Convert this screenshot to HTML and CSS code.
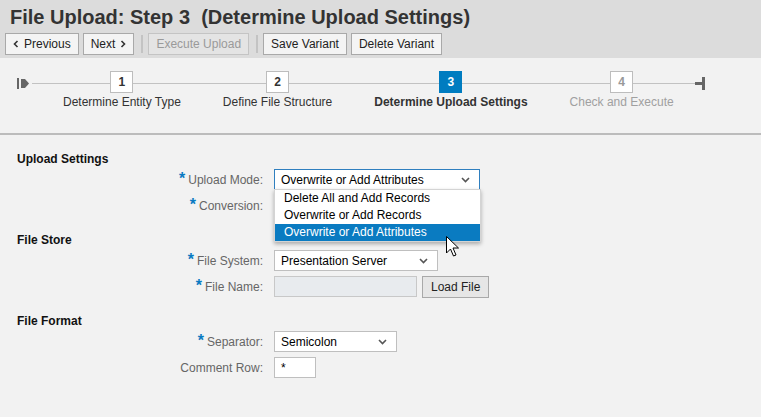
FILE: index.html
```html
<!DOCTYPE html>
<html lang="en">
<head>
<meta charset="utf-8">
<title>File Upload: Step 3</title>
<link rel="stylesheet" href="styles.css">
</head>
<body>
<div class="page">
  <header class="header">
    <h1 class="title">File Upload: Step 3&nbsp; (Determine Upload Settings)</h1>
    <div class="toolbar">
      <button class="btn"><svg class="chev" width="6" height="8" viewBox="0 0 6 8"><path d="M4.5 1 L1.5 4 L4.5 7" fill="none" stroke="#333" stroke-width="1.6"/></svg>Previous</button>
      <button class="btn">Next<svg class="chev chev-r" width="6" height="8" viewBox="0 0 6 8"><path d="M1.5 1 L4.5 4 L1.5 7" fill="none" stroke="#333" stroke-width="1.6"/></svg></button>
      <span class="tb-sep"></span>
      <button class="btn btn-disabled">Execute Upload</button>
      <span class="tb-sep"></span>
      <button class="btn">Save Variant</button>
      <button class="btn">Delete Variant</button>
    </div>
  </header>

  <nav class="roadmap">
    <svg class="rm-start" width="13" height="11" viewBox="0 0 13 11"><rect x="0" y="0" width="2" height="11" fill="#666"/><path d="M4 1 H8 L12 5.5 L8 10 H4 Z" fill="#666"/></svg>
    <div class="steps">
      <div class="step"><span class="step-num">1</span><span class="step-label">Determine Entity Type</span></div>
      <div class="step"><span class="step-num">2</span><span class="step-label">Define File Structure</span></div>
      <div class="step step-current"><span class="step-num">3</span><span class="step-label">Determine Upload Settings</span></div>
      <div class="step step-future"><span class="step-num">4</span><span class="step-label">Check and Execute</span></div>
    </div>
    <svg class="rm-end" width="11" height="13" viewBox="0 0 11 13"><rect x="0" y="5" width="8" height="3" fill="#666"/><rect x="7" y="0" width="3" height="13" fill="#666"/></svg>
  </nav>

  <div class="divider"></div>

  <main class="form">
    <section class="section">
      <h2 class="section-title">Upload Settings</h2>
      <div class="row">
        <label class="label"><span class="req">*</span>Upload Mode:</label>
        <div class="field field-open">
          <div class="select select-focus w-206"><span>Overwrite or Add Attributes</span><svg class="caret" width="9" height="6" viewBox="0 0 9 6"><path d="M1 1 L4.5 4.5 L8 1" fill="none" stroke="#555" stroke-width="1.6"/></svg></div>
          <ul class="dropdown">
            <li class="opt">Delete All and Add Records</li>
            <li class="opt">Overwrite or Add Records</li>
            <li class="opt opt-sel">Overwrite or Add Attributes</li>
          </ul>
        </div>
      </div>
      <div class="row">
        <label class="label"><span class="req">*</span>Conversion:</label>
        <div class="field"><div class="select w-206"></div></div>
      </div>
    </section>

    <section class="section section-2">
      <h2 class="section-title">File Store</h2>
      <div class="row">
        <label class="label"><span class="req">*</span>File System:</label>
        <div class="field"><div class="select w-164"><span>Presentation Server</span><svg class="caret" width="9" height="6" viewBox="0 0 9 6"><path d="M1 1 L4.5 4.5 L8 1" fill="none" stroke="#555" stroke-width="1.6"/></svg></div></div>
      </div>
      <div class="row">
        <label class="label"><span class="req">*</span>File Name:</label>
        <div class="field field-inline"><div class="input input-ro w-143"></div><button class="btn btn-load">Load File</button></div>
      </div>
    </section>

    <section class="section section-3">
      <h2 class="section-title">File Format</h2>
      <div class="row">
        <label class="label"><span class="req">*</span>Separator:</label>
        <div class="field"><div class="select w-123"><span>Semicolon</span><svg class="caret" width="9" height="6" viewBox="0 0 9 6"><path d="M1 1 L4.5 4.5 L8 1" fill="none" stroke="#555" stroke-width="1.6"/></svg></div></div>
      </div>
      <div class="row">
        <label class="label">Comment Row:</label>
        <div class="field"><div class="input w-42">*</div></div>
      </div>
    </section>
  </main>

  <svg class="cursor" width="13" height="21" viewBox="0 0 13 21"><path d="M0.5 0.5 V17 L4.5 13 L7.5 20 L10 19 L7 12 H12.5 Z" fill="#fff" stroke="#000" stroke-width="1"/></svg>
</div>
</body>
</html>
```

FILE: styles.css
```css
* { box-sizing: border-box; }
html, body { margin: 0; padding: 0; }
body {
  font-family: "Liberation Sans", Arial, sans-serif;
  font-size: 12px;
  color: #333;
  background: #f2f2f2;
  width: 761px;
  height: 417px;
  overflow: hidden;
}
.page { position: relative; height: 417px; }

.header {
  background: #dcdcdc;
  height: 58px;
  padding: 5px 0 0 0;
}
.title {
  margin: 0 0 0 10px;
  font-size: 20px;
  line-height: 24px;
  font-weight: bold;
  color: #333;
}
.toolbar {
  display: flex;
  align-items: center;
  gap: 4px;
  margin-top: 4px;
  padding-left: 5px;
}
.btn {
  height: 22px;
  padding: 0 7px;
  font-family: inherit;
  font-size: 12px;
  color: #222;
  background: #f4f4f4;
  border: 1px solid #a9a9a9;
  border-radius: 0;
  display: inline-flex;
  align-items: center;
  gap: 5px;
  line-height: 1;
}
.btn-disabled { color: #9a9a9a; border-color: #c4c4c4; background: #e4e4e4; }
.chev { display: block; }
.tb-sep {
  width: 2px;
  height: 18px;
  background: #c3c3c3;
  margin: 0 1px 0 3px;
}

.roadmap {
  display: flex;
  align-items: flex-start;
  margin-top: 13px;
  padding-left: 17px;
  height: 38px;
}
.rm-start { margin-top: 7px; display: block; }
.rm-end { margin-top: 6px; display: block; }
.steps {
  display: flex;
  margin-left: 2px;
  padding-left: 10px;
  background: linear-gradient(#c2c2c2, #c2c2c2) no-repeat 0 12px / 100% 1px;
}
.step {
  display: flex;
  flex-direction: column;
  align-items: center;
  padding: 0 21px;
}
.step-num {
  width: 23px;
  height: 22px;
  border: 1px solid #bdbdbd;
  background: #fff;
  font-weight: bold;
  font-size: 12px;
  line-height: 20px;
  text-align: center;
  color: #333;
}
.step-label {
  margin-top: 2px;
  line-height: 14px;
  color: #333;
  white-space: nowrap;
}
.step-current .step-num { background: #007cc0; border-color: #007cc0; color: #fff; }
.step-current .step-label { font-weight: bold; }
.step-future .step-num { color: #999; }
.step-future .step-label { color: #a0a0a0; }

.divider {
  margin-top: 24px;
  height: 2px;
  background: #bcbcbc;
}

.form { padding-left: 17px; padding-top: 17px; }
.section-title {
  margin: 0 0 3px 0;
  font-size: 12px;
  line-height: 14px;
  font-weight: bold;
  color: #111;
}
.section-2 { margin-top: 17px; }
.section-3 { margin-top: 17px; }
.row {
  display: flex;
  align-items: center;
  height: 21px;
  gap: 11px;
}
.row + .row { margin-top: 5px; }
.label {
  width: 246px;
  text-align: right;
  color: #666;
  white-space: nowrap;
  display: flex;
  justify-content: flex-end;
  align-items: center;
}
.req {
  color: #0a7ac2;
  font-weight: bold;
  font-size: 16px;
  line-height: 12px;
  margin-right: 3px;
  position: relative;
  top: -1px;
}
.field { display: flex; align-items: center; }
.field-open { position: relative; }
.field-inline { gap: 5px; }
.select {
  height: 21px;
  background: #fff;
  border: 1px solid #bfbfbf;
  display: flex;
  align-items: center;
  justify-content: space-between;
  padding: 0 9px 0 6px;
  color: #000;
  white-space: nowrap;
}
.select-focus { border-color: #2f7fbf; }
.caret { display: block; }
.input {
  height: 21px;
  background: #fff;
  border: 1px solid #bfbfbf;
  padding: 3px 6px 0;
  color: #000;
}
.input-ro { background: #e8ebee; border-color: #c8c8c8; }
.btn-load { height: 22px; background: #e6e6e6; color: #222; padding: 0 8px; }
.w-206 { width: 206px; }
.w-164 { width: 164px; }
.w-143 { width: 143px; }
.w-123 { width: 123px; }
.w-42 { width: 42px; }

.dropdown {
  position: absolute;
  top: 20px;
  left: 0;
  width: 207px;
  margin: 0;
  padding: 0;
  list-style: none;
  background: #fff;
  border: 1px solid #d4d4d4;
  box-shadow: 0 2px 4px rgba(0,0,0,0.3);
  z-index: 5;
}
.opt {
  height: 17px;
  line-height: 17px;
  padding-left: 9px;
  color: #000;
  white-space: nowrap;
}
.opt-sel { background: #0a7bc1; color: #fff; height: 17px; }

.cursor {
  position: absolute;
  left: 446px;
  top: 236px;
  z-index: 10;
}
```
